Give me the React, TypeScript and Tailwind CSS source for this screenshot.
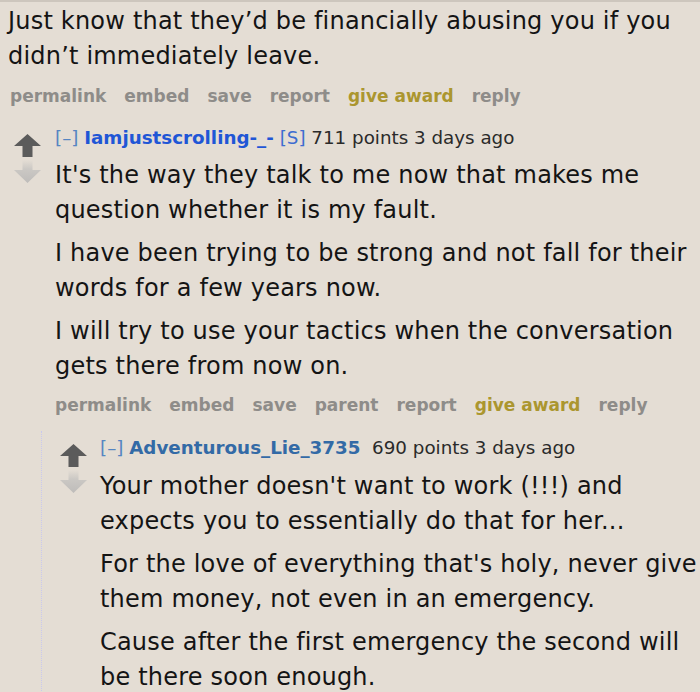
import React from 'react';

const font = { fontFamily: '"DejaVu Sans", Verdana, sans-serif' };

function Arrows() {
  return (
    <svg width="27" height="50" viewBox="0 0 27 50" className="shrink-0">
      <defs>
        <linearGradient id="downFade" x1="0" y1="0" x2="0" y2="1">
          <stop offset="0" stopColor="#e4ddd4" />
          <stop offset="0.4" stopColor="#cbc8c4" />
          <stop offset="1" stopColor="#bebcba" />
        </linearGradient>
      </defs>
      <path d="M13.5 0 L27 12 L18.5 12 L18.5 23 L8.5 23 L8.5 12 L0 12 Z" fill="#5b5b5b" />
      <path d="M8.5 26 L18.5 26 L18.5 36 L27 36 L13.5 49 L0 36 L8.5 36 Z" fill="url(#downFade)" />
    </svg>
  );
}

function Actions({ items }: { items: string[] }) {
  return (
    <div className="flex gap-[18px] text-[17px] leading-[24px] font-bold text-[#8e8c89]">
      {items.map((item) => (
        <span key={item} className={item === 'give award' ? 'text-[#ab962f]' : ''}>
          {item}
        </span>
      ))}
    </div>
  );
}

function Body({ paragraphs }: { paragraphs: string[][] }) {
  return (
    <div className="flex flex-col gap-[8px] text-[24px] leading-[35px] tracking-[0.2px] text-[#141414] whitespace-nowrap">
      {paragraphs.map((lines, i) => (
        <p key={i}>
          {lines.map((line, j) => (
            <React.Fragment key={j}>
              {j > 0 && <br />}
              {line}
            </React.Fragment>
          ))}
        </p>
      ))}
    </div>
  );
}

export default function App() {
  return (
    <div className="min-h-screen bg-[#e4ddd4] border-t-2 border-[#cdc6bd] overflow-hidden" style={font}>
      <div className="pl-[8px] pt-[2px]">
        <Body paragraphs={[['Just know that they\u2019d be financially abusing you if you', 'didn\u2019t immediately leave.']]} />
        <div className="pl-[2px] mt-[10px]">
          <Actions items={['permalink', 'embed', 'save', 'report', 'give award', 'reply']} />
        </div>
      </div>

      {/* reply from OP */}
      <div className="mt-[17px] pl-[14px]">
        <div className="flex gap-[14px]">
          <div className="pt-[9px]">
            <Arrows />
          </div>
          <div>
            <div className="text-[18.3px] leading-[26px] text-[#2a2a2a] whitespace-nowrap">
              <span className="text-[#5585c2]">[–] </span>
              <span className="font-bold text-[#1f56d6]">Iamjustscrolling-_-</span>
              <span className="text-[#3d6cd0]"> [S] </span>
              <span>711 points 3 days ago</span>
            </div>
            <div className="mt-[7px]">
              <Body
                paragraphs={[
                  ["It's the way they talk to me now that makes me", 'question whether it is my fault.'],
                  ['I have been trying to be strong and not fall for their', 'words for a few years now.'],
                  ['I will try to use your tactics when the conversation', 'gets there from now on.'],
                ]}
              />
            </div>
            <div className="mt-[9px]">
              <Actions items={['permalink', 'embed', 'save', 'parent', 'report', 'give award', 'reply']} />
            </div>
          </div>
        </div>

        {/* nested reply */}
        <div className="ml-[27px] mt-[14px] border-l border-dotted border-[#c9c8ee] pl-[18px] pt-[4px]">
          <div className="flex gap-[13px]">
            <div className="pt-[9px]">
              <Arrows />
            </div>
            <div>
              <div className="text-[18.3px] leading-[26px] text-[#2a2a2a] whitespace-nowrap">
                <span className="text-[#5585c2]">[–] </span>
                <span className="font-bold text-[#336aa6]">Adventurous_Lie_3735</span>
                <span>&nbsp; 690 points 3 days ago</span>
              </div>
              <div className="mt-[8px] pb-[20px]">
                <Body
                  paragraphs={[
                    ["Your mother doesn't want to work (!!!) and", 'expects you to essentially do that for her...'],
                    ["For the love of everything that's holy, never give", 'them money, not even in an emergency.'],
                    ['Cause after the first emergency the second will', 'be there soon enough.'],
                  ]}
                />
              </div>
            </div>
          </div>
        </div>
      </div>
    </div>
  );
}
